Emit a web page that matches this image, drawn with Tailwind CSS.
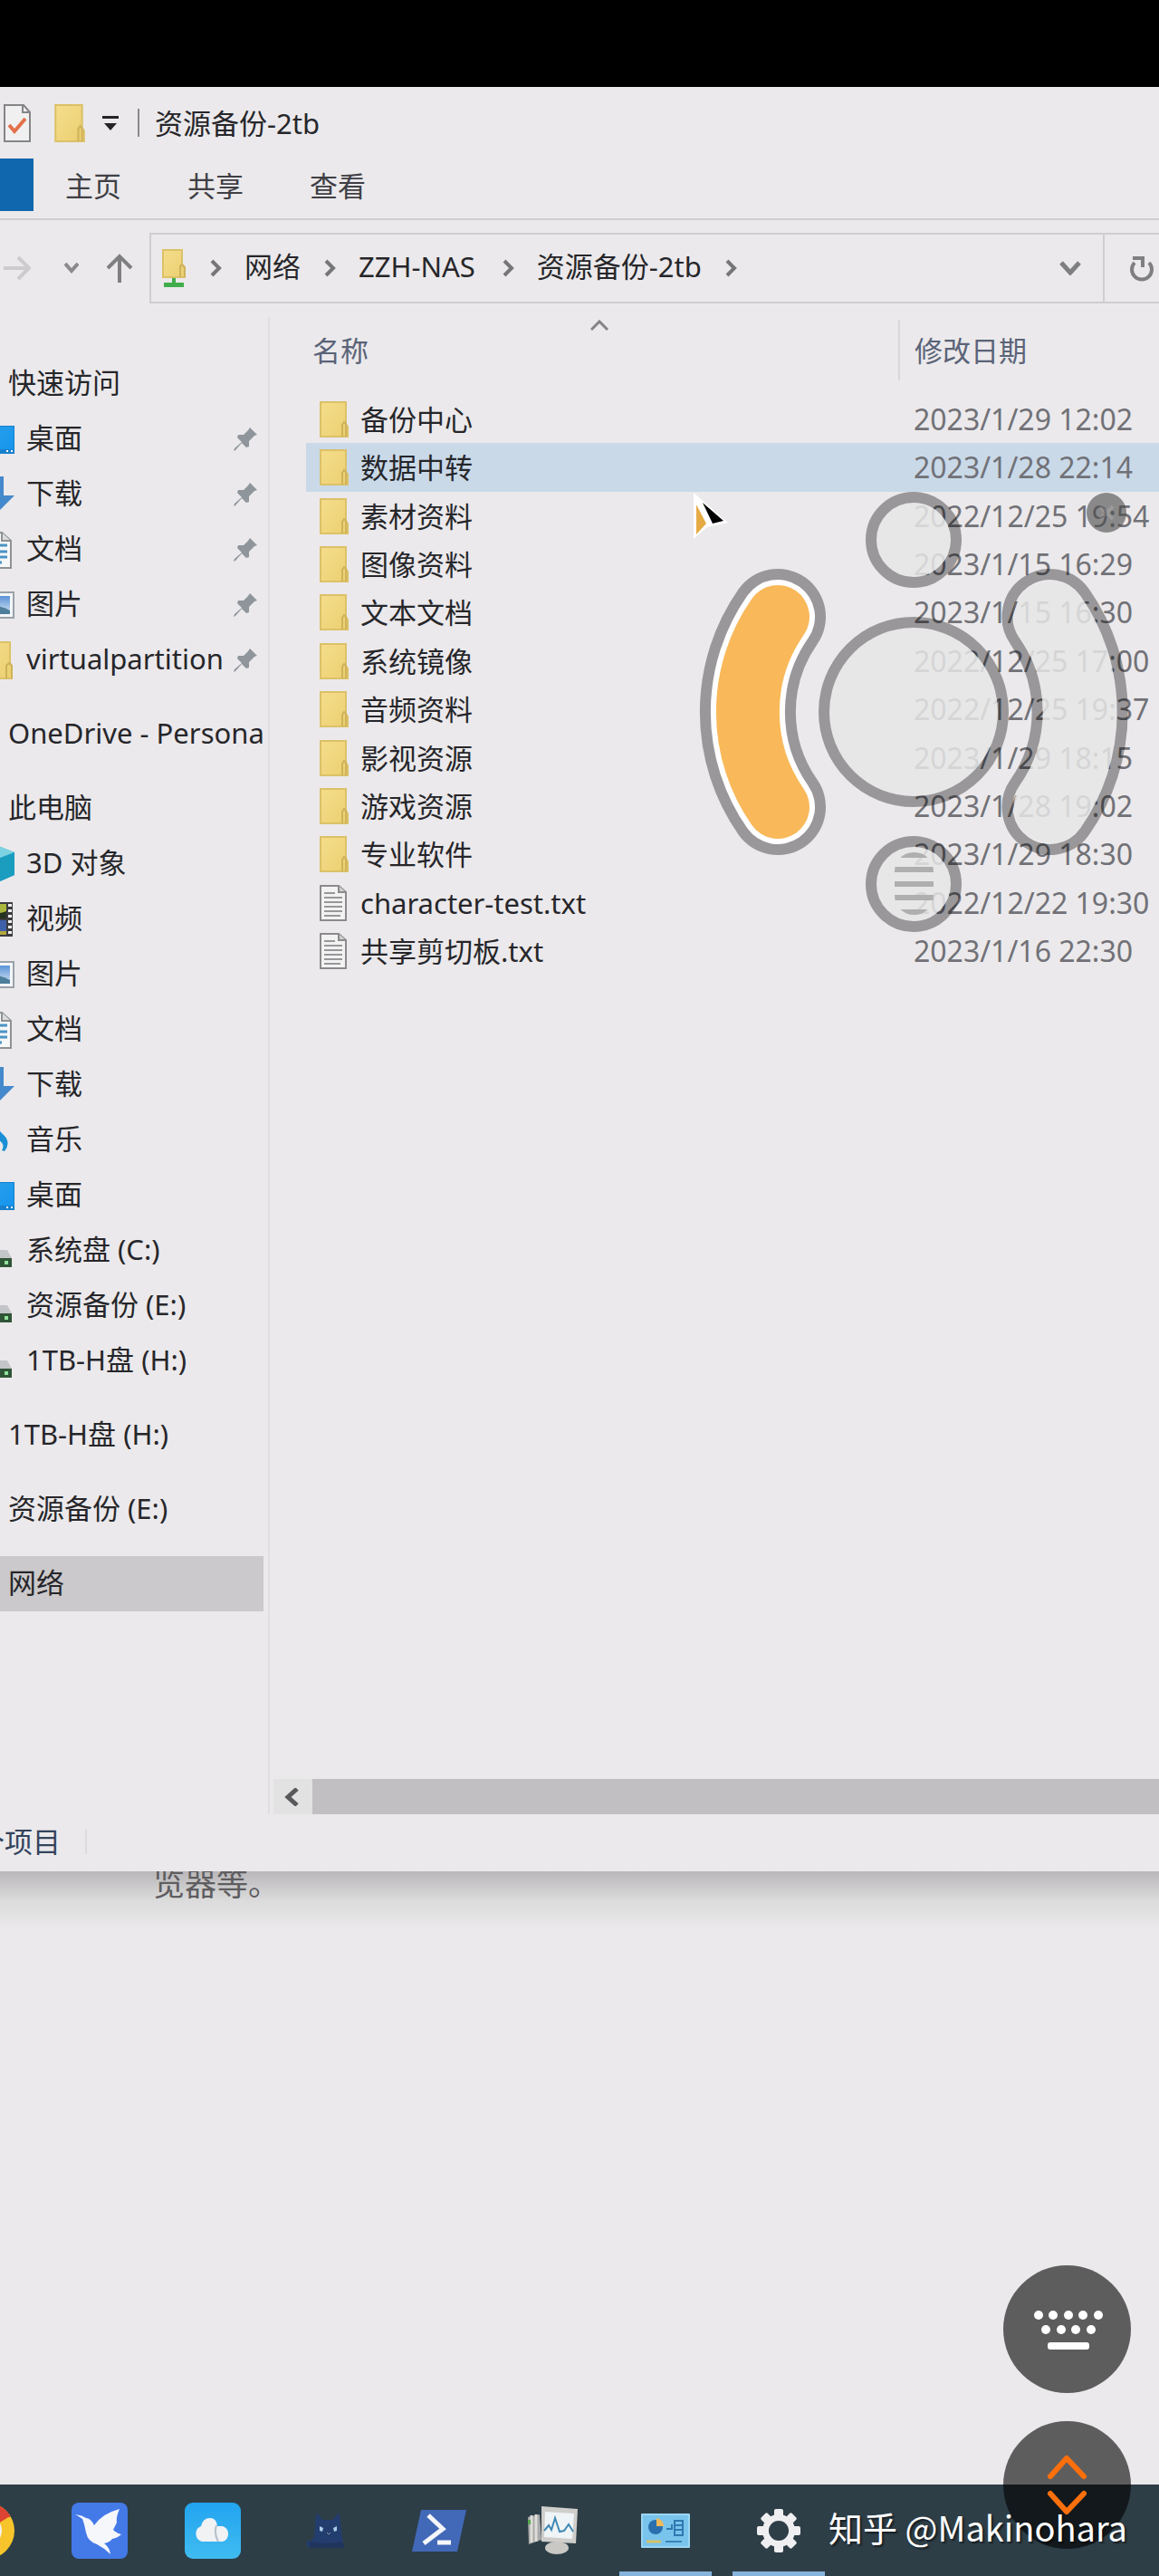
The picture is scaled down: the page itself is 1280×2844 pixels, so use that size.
<!DOCTYPE html>
<html lang="zh-CN">
<head>
  <meta charset="UTF-8" />
  <meta name="viewport" content="width=device-width, initial-scale=1" />
  <title>资源备份-2tb</title>
  <script src="https://cdn.jsdelivr.net/npm/@tailwindcss/browser@4"></script>
</head>
<body class="relative flex min-h-screen flex-col overflow-x-hidden bg-[#ebe9eb] font-['Noto_Sans','Noto_Sans_CJK_SC',sans-serif] text-[31px] leading-[40px] text-[#26262a]">

  <!-- Icon set -->
  <svg class="absolute size-0" aria-hidden="true">
    <defs>
      <linearGradient id="g-folder" x1="0" y1="0" x2="1" y2="1"><stop offset="0" stop-color="#f5dd8c"/><stop offset="1" stop-color="#ebcf70"/></linearGradient>
      <linearGradient id="g-desktop" x1="0" y1="0" x2="1" y2="1"><stop offset="0" stop-color="#2a9fe8"/><stop offset="1" stop-color="#1796ee"/></linearGradient>
      <linearGradient id="g-sky" x1="0" y1="0" x2="0" y2="1"><stop offset="0" stop-color="#5b93d8"/><stop offset="1" stop-color="#d6e6f2"/></linearGradient>
      <linearGradient id="g-cloud" x1="0" y1="0" x2="0" y2="1"><stop offset="0" stop-color="#22a4f0"/><stop offset="1" stop-color="#3fbcf0"/></linearGradient>
    </defs>
    <symbol id="folder" viewBox="0 0 32 40"><path d="M1 1h28v24l2 3v11H1z" fill="url(#g-folder)" stroke="#dcc168" stroke-width="2"/><path d="M25 39V26l2-3 2 2v14" fill="none" stroke="#cfb25a" stroke-width="2"/></symbol>
    <symbol id="text" viewBox="0 0 32 40"><path d="M1 1h20l8 7v31H1z" fill="#f2f2f3" stroke="#8b8b8d" stroke-width="2"/><path d="M21 1v7h8" fill="#cfcfd0" stroke="#8b8b8d" stroke-width="2"/><path d="M5 9h12M5 14h20M5 19h20M5 24h20M5 29h20M5 34h18" stroke="#98989a" stroke-width="2"/></symbol>
    <symbol id="desktop" viewBox="0 0 36 42"><path d="M0 6h36v31H0z" fill="#1780cc"/><path d="M0 7h35v25H0z" fill="url(#g-desktop)"/><path d="M27 33h2v2h-2zM32 33h2v2h-2z" fill="#fff"/></symbol>
    <symbol id="download" viewBox="0 0 36 42"><path d="M12 1h12v21h12L18 40 0 22h12z" fill="#4389cc"/></symbol>
    <symbol id="document" viewBox="0 0 36 42"><path d="M2 2h20l10 9v30H2z" fill="#f6f7f8" stroke="#8f9294" stroke-width="2"/><path d="M22 2v9h10" fill="#dcdcde" stroke="#8f9294" stroke-width="2"/><path d="M6 16h22M6 23h22M6 29h22M6 35h16" stroke="#4a93c4" stroke-width="3"/></symbol>
    <symbol id="picture" viewBox="0 0 36 42"><path d="M1 7h34v28H1z" fill="#f4f6f8" stroke="#9aa2aa" stroke-width="2"/><path d="M5 11h26v20H5z" fill="url(#g-sky)"/><path d="M5 24q10-5 26 3v4H5z" fill="#4d7f9c"/></symbol>
    <symbol id="folder-wide" viewBox="0 0 36 42"><path d="M2 1h29v23l2 3v14H2z" fill="url(#g-folder)" stroke="#dcc168" stroke-width="2"/><path d="M27 41V27l3-3 3 3v14" fill="none" stroke="#cfb25a" stroke-width="2"/></symbol>
    <symbol id="cube" viewBox="0 0 36 42"><path d="M18 1l18 7v25L18 41 0 33V8z" fill="#25a5c4"/><path d="M18 1l18 7-18 7L0 8z" fill="#7ed3e2"/><path d="M18 15l18-7v25l-18 8z" fill="#1b9dc0"/></symbol>
    <symbol id="film" viewBox="0 0 36 42"><path d="M2 2h32v38H2z" fill="#3b3b40"/><path d="M6 4h21v16H6z" fill="#a9b53b"/><path d="M6 22h21v12H6z" fill="#3f5fa8"/><path d="M6 13q8 4 21-1v8H6z" fill="#25331f"/><path d="M6 34h21v4H6z" fill="#b2a73c"/><path d="M31 4v35" stroke="#f1f1f1" stroke-width="4" stroke-dasharray="3 3"/></symbol>
    <symbol id="music" viewBox="0 0 36 42"><path d="M15 1q1 6 8 13 10 9 2 19l-3-1q5-8-7-13z" fill="#1b8fd6"/><ellipse cx="9" cy="35" rx="8" ry="6" fill="#1b8fd6"/></symbol>
    <symbol id="drive" viewBox="0 0 36 42"><path d="M2 20h26l5 9H0z" fill="#c4c5c8"/><path d="M0 29h33v10H0z" fill="#2f5537"/><path d="M25 32h4v4h-4z" fill="#8fe39a"/></symbol>
    <symbol id="pin" viewBox="0 0 26 26"><path d="M18 0l8 8-3 1-1 1-5 5 0 6-3 1-5-5-7 8-2 1 1-3 8-7-5-5 1-3h6l5-5z" fill="#8e959b"/></symbol>
    <symbol id="next" viewBox="0 0 14 20"><path d="M3 2l8 8-8 8" fill="none" stroke="#767578" stroke-width="4"/></symbol>
  </svg>

  <div class="h-24 bg-black"></div>

  <!-- Explorer window -->
  <div>
    <header>
      <div class="flex h-[79px] items-center pl-1">
        <svg class="h-[42px] w-[30px]" viewBox="0 0 30 42"><path d="M1 1h21l7 8v32H1z" fill="#f1f0f1" stroke="#858487" stroke-width="2"/><path d="M21 1v8h8" fill="none" stroke="#858487" stroke-width="2"/><path d="M6 23l6 7L24 16" fill="none" stroke="#e2714a" stroke-width="4"/></svg>
        <svg class="ml-[26px] h-[42px] w-[34px]"><use href="#folder"/></svg>
        <svg class="ml-[19px] h-[18px] w-[18px]" viewBox="0 0 18 18"><path d="M0 1h18v3H0zM2 9h14l-7 8z" fill="#242427"/></svg>
        <span class="ml-[21px] h-[31px] w-[2px] bg-[#8a898c]"></span>
        <h1 class="ml-[17px]">资源备份-2tb</h1>
      </div>
      <nav class="flex border-b-2 border-[#cfcdd0] pb-2 text-[#3f3f45]">
        <a href="#" aria-label="文件" class="h-[58px] w-[37px] bg-[#1167ad]"></a>
        <a href="#" class="ml-[35px] pt-[10px]">主页</a>
        <a href="#" class="ml-[73px] pt-[10px]">共享</a>
        <a href="#" class="ml-[73px] pt-[10px]">查看</a>
      </nav>
      <div class="flex items-center pt-[14px] pb-[15px] pl-1">
        <button aria-label="前进"><svg class="h-[30px] w-[30px]" viewBox="0 0 30 30"><path d="M0 15h27M16 3l12 12-12 12" fill="none" stroke="#cdcbce" stroke-width="4"/></svg></button>
        <button aria-label="最近位置" class="ml-[37px]"><svg class="h-3 w-4" viewBox="0 0 16 12"><path d="M1 1l7 8 7-8" fill="none" stroke="#8b8a8d" stroke-width="4"/></svg></button>
        <button aria-label="上移" class="ml-[30px]"><svg class="h-8 w-[30px]" viewBox="0 0 30 32"><path d="M15 32V3M2 16L15 3l13 13" fill="none" stroke="#7f7e81" stroke-width="4"/></svg></button>
        <div class="ml-[18px] flex h-[78px] min-w-0 flex-1 items-center border-y-2 border-l-2 border-[#cfcdd0] whitespace-nowrap">
          <svg class="ml-3 h-[42px] w-[26px]" viewBox="0 0 26 42"><path d="M1 1h21v17l3 3v10H1z" fill="url(#g-folder)" stroke="#dcc168" stroke-width="2"/><path d="M20 31V19l2-2 3 3v11" fill="none" stroke="#cfb25a" stroke-width="2"/><path d="M11 32h4v5h9v5H2v-5h9z" fill="#3fae4a"/></svg>
          <svg class="ml-[26px] h-5 w-[14px]"><use href="#next"/></svg>
          <a href="#" class="ml-[25px] pb-1">网络</a>
          <svg class="ml-[25px] h-5 w-[14px]"><use href="#next"/></svg>
          <a href="#" class="ml-[25px] pb-1">ZZH-NAS</a>
          <svg class="ml-[29px] h-5 w-[14px]"><use href="#next"/></svg>
          <a href="#" class="ml-[25px] pb-1">资源备份-2tb</a>
          <svg class="ml-[25px] h-5 w-[14px]"><use href="#next"/></svg>
          <button aria-label="展开地址" class="mr-6 ml-auto"><svg class="h-4 w-6" viewBox="0 0 24 16"><path d="M2 2l10 11L22 2" fill="none" stroke="#7f7e81" stroke-width="5"/></svg></button>
          <button aria-label="刷新" class="flex h-full w-[62px] items-center border-l-2 border-[#cfcdd0] pl-7"><svg class="h-[30px] w-[28px]" viewBox="0 0 28 30"><path d="M5 9a11 11 0 1 0 16 0M3 4h11v10" fill="none" stroke="#7f7e81" stroke-width="4"/></svg></button>
        </div>
      </div>
    </header>

    <main class="flex">
      <aside class="w-[298px] shrink-0 overflow-hidden border-r-2 border-[#e1dfe2] pt-[43px] pb-[224px]">
        <ul id="tree" class="mr-[5px] whitespace-nowrap"></ul>
      </aside>

      <section class="flex min-w-0 flex-1 flex-col">
        <div class="flex-1 pl-10">
          <table class="h-[727px] w-full table-fixed text-left">
            <thead class="text-[#5a6378]">
              <tr class="h-[86px] align-top">
                <th class="relative pt-[17px] pl-[7px] font-normal">名称
                  <svg class="absolute top-[3px] left-[314px] h-3 w-5" viewBox="0 0 20 12"><path d="M1 11l9-9 9 9" fill="none" stroke="#848386" stroke-width="3"/></svg>
                </th>
                <th class="w-[288px] pt-[3px] font-normal"><div class="h-[67px] border-l-2 border-[#d9d7da] pt-[14px] pl-4">修改日期</div></th>
              </tr>
            </thead>
            <tbody id="files" class="whitespace-nowrap"></tbody>
          </table>
        </div>
        <div class="flex h-[39px] pl-1">
          <button aria-label="向左滚动" class="flex w-[43px] items-center justify-center bg-[#e3e2e3] pr-1"><svg class="h-5 w-4" viewBox="0 0 16 20"><path d="M14 1L4 10l10 9" fill="none" stroke="#59585b" stroke-width="5"/></svg></button>
          <div class="flex-1 bg-[#c1bfc1]"></div>
        </div>
      </section>
    </main>

    <footer class="flex h-[63px] items-center overflow-hidden pb-[3px] text-[#33435c]">
      <span class="-ml-[26px]">个项目</span>
      <span class="ml-[27px] h-7 w-[2px] bg-[#dddbde]"></span>
    </footer>
  </div>

  <!-- Page behind the window, shaded by it -->
  <div class="flex-1 overflow-hidden">
    <div class="h-16 bg-linear-to-b from-[#b9b7b9] via-[#dcdbdc] to-[#ebe9eb] pl-[169px]">
      <p class="relative -top-1 text-[35px] leading-[35px] text-[#5e5d60]">览器等。</p>
    </div>
  </div>

  <!-- Taskbar -->
  <div class="flex h-[101px] overflow-hidden bg-[#2e3e47]">
    <button aria-label="Chrome" class="-ml-[78px] flex w-[125px] shrink-0 items-center justify-center">
      <svg class="h-[62px] w-[62px]" viewBox="0 0 62 62"><circle cx="31" cy="31" r="31" fill="#f7c52b"/><path d="M31 31L4 15a31 31 0 0 1 53 0z" fill="#dd4332"/><path d="M31 0a31 31 0 0 1 27 16H31z" fill="#dd4332"/><path d="M4 15a31 31 0 0 0 27 47l9-25z" fill="#3aa757"/><circle cx="31" cy="31" r="17" fill="#f3f1ee"/><circle cx="31" cy="31" r="12" fill="#4585ec"/></svg>
    </button>
    <button aria-label="迅雷" class="flex w-[125px] shrink-0 items-center justify-center">
      <svg class="h-[62px] w-[62px]" viewBox="0 0 62 62"><rect width="62" height="62" rx="8" fill="#4479e8"/><path d="M4 13q8 1 12 4 5 0 9 8Q34 12 53 7q-4 9-3 15l-4 8q4 4 9 5-4 4-10 5-3 4-9 5 6 4 7 12-7-7-15-11-10-3-12-13-2-10-4-15-4-3-8-5z" fill="#f5f7fb"/></svg>
    </button>
    <button aria-label="云盘" class="flex w-[125px] shrink-0 items-center justify-center">
      <svg class="h-[62px] w-[62px]" viewBox="0 0 62 62"><rect width="62" height="62" rx="9" fill="url(#g-cloud)"/><path d="M19 43a9 9 0 0 1-1-17q2-9 10-9 7 0 8 9h6a9 9 0 0 1 0 17z" fill="#f0f2f4"/><path d="M35 25q-3 9 2 18" fill="none" stroke="#b4bfca" stroke-width="2"/></svg>
    </button>
    <button aria-label="Clash" class="flex w-[125px] shrink-0 items-center justify-center">
      <svg class="h-[40px] w-[44px]" viewBox="0 0 44 40"><path d="M11 1q4 1 7 7h12q3-6 7-7l2 21 3 17H4q-5-3-3-8 6 2 8-5z" fill="#233d6e"/><path d="M4 32q16 4 36 0l2 7H4z" fill="#21345c"/><path d="M15 15l4 2-1 4-3-1zM34 15l-4 2 1 4 3-1z" fill="#a9cce8"/><path d="M23 22l2 2 2-2" fill="none" stroke="#7a92b4"/></svg>
    </button>
    <button aria-label="PowerShell" class="flex w-[125px] shrink-0 items-center justify-center">
      <svg class="h-[48px] w-[60px]" viewBox="0 0 60 48"><path d="M10 1h50L50 47H0z" fill="#4268b8"/><path d="M18 7l16 15-21 16" fill="none" stroke="#f4f6fa" stroke-width="5"/><path d="M28 37h15" stroke="#f4f6fa" stroke-width="5"/></svg>
    </button>
    <button aria-label="监视器" class="flex w-[125px] shrink-0 items-center justify-center">
      <svg class="h-[54px] w-[56px]" viewBox="0 0 56 54"><path d="M1 12l13-3 2 28-14 5z" fill="#a9aaa9"/><path d="M5 10v30M10 9v30" stroke="#deddd9" stroke-width="3"/><path d="M1 15h3v5H1z" fill="#57a74f"/><ellipse cx="33" cy="46" rx="13" ry="7" fill="#c9c8c5"/><path d="M16 0l40 3-2 38-38-2z" fill="#cfcecb"/><path d="M20 6l32 2-2 28-31-2z" fill="#eff4f6"/><path d="M19 27l5-6 3 5 4-13 5 15 5-1 5-7 5 8" fill="none" stroke="#3f89b4" stroke-width="2"/></svg>
    </button>
    <button aria-label="控制面板" class="relative flex w-[125px] shrink-0 items-center justify-center">
      <svg class="h-[38px] w-[54px]" viewBox="0 0 54 38"><rect width="54" height="38" rx="1" fill="#9bd6f2"/><path d="M2 2h50v34H2z" fill="#79c4ec"/><circle cx="16" cy="15" r="8" fill="#2b70ad"/><path d="M17 14V5a9 9 0 0 1 8 9z" fill="#eeb95b"/><path d="M37 8h9v16h-9zM37 13h9M37 18h9M28 17h6v-5" fill="none" stroke="#3078b0" stroke-width="2"/><path d="M6 31h16" stroke="#d5c36b" stroke-width="3"/><path d="M27 31h18" stroke="#3c83b8" stroke-width="2"/></svg>
      <span class="absolute bottom-0 h-[5px] w-[102px] bg-[#86b3dc]"></span>
    </button>
    <button aria-label="设置" class="relative flex w-[125px] shrink-0 items-center justify-center">
      <svg class="h-12 w-12" viewBox="0 0 48 48"><g fill="#efeff1"><g id="teeth"><rect x="19" y="0" width="10" height="48" rx="2"/><rect x="0" y="19" width="48" height="10" rx="2"/></g><use href="#teeth" transform="rotate(45 24 24)"/><circle cx="24" cy="24" r="18"/></g><circle cx="24" cy="24" r="11" fill="#2e3e47"/></svg>
      <span class="absolute bottom-0 h-[5px] w-[102px] bg-[#86b3dc]"></span>
    </button>
  </div>

  <!-- Pointer and touch pad that float over the desktop -->
  <svg class="absolute top-[540px] left-[760px] h-[500px] w-[500px]" viewBox="760 540 500 500">
    <path d="M766 544v51l15-13 23-5z" fill="#fff"/>
    <path d="M769 557v33l11-12z" fill="#e6aa45"/>
    <path d="M776 555l23 20-12 3z" fill="#000"/>
    <g fill="#e6e6e6" fill-opacity=".85">
      <circle cx="1009" cy="596" r="41"/>
      <circle cx="1009" cy="786" r="93"/>
      <circle cx="1009" cy="976" r="41"/>
      <path d="M1126 704A41 41 0 0 1 1193 657A225 225 0 0 1 1193 915A41 41 0 0 1 1126 868A143 143 0 0 0 1126 704Z"/>
    </g>
    <g fill="none" stroke="#000" stroke-opacity=".35" stroke-width="12">
      <circle cx="1009" cy="596" r="47"/>
      <circle cx="1009" cy="786" r="99"/>
      <circle cx="1009" cy="976" r="47"/>
      <path d="M1121 708A47 47 0 0 1 1198 654A230 230 0 0 1 1198 918A47 47 0 0 1 1121 864A136 136 0 0 0 1121 708Z"/>
    </g>
    <g fill="none" stroke-linecap="round">
      <path d="M859 681A183 183 0 0 0 859 891" stroke="#999799" stroke-width="106"/>
      <path d="M859 681A183 183 0 0 0 859 891" stroke="#fff" stroke-width="82"/>
      <path d="M859 681A183 183 0 0 0 859 891" stroke="#f9b95a" stroke-width="70"/>
    </g>
    <clipPath id="wheel"><rect x="988" y="941" width="43" height="69" rx="21"/></clipPath>
    <path clip-path="url(#wheel)" d="M988 944h43M988 960h43M988 976h43M988 991h43M988 1007h43" stroke="#afafaf" stroke-width="6"/>
    <circle cx="1222" cy="566" r="22" fill="#4a4a4a" fill-opacity=".6"/>
    <path d="M1215 559l14 14M1229 559l-14 14" stroke="#fff" stroke-opacity=".15" stroke-width="4"/>
  </svg>

  <!-- Floating buttons -->
  <div class="absolute right-[31px] bottom-[30px] flex flex-col gap-[31px]">
    <button aria-label="键盘" class="size-[141px] rounded-full bg-black/60">
      <svg viewBox="0 0 141 141"><g fill="#fff"><circle cx="39" cy="55" r="5"/><circle cx="55" cy="55" r="5"/><circle cx="72" cy="55" r="5"/><circle cx="88" cy="55" r="5"/><circle cx="105" cy="55" r="5"/><circle cx="47" cy="71" r="5"/><circle cx="64" cy="71" r="5"/><circle cx="80" cy="71" r="5"/><circle cx="97" cy="71" r="5"/><rect x="49" y="85" width="46" height="8" rx="3"/></g></svg>
    </button>
    <button aria-label="滚动" class="size-[141px] rounded-full bg-black/60">
      <svg viewBox="0 0 141 141"><path d="M52 61l18-20 19 20M52 80l18 20 19-20" fill="none" stroke="#fb6f0c" stroke-width="6" stroke-linecap="round" stroke-linejoin="round"/></svg>
    </button>
  </div>
  <p class="absolute right-[35px] bottom-[27px] font-['Noto_Sans_CJK_SC',sans-serif] text-[38px] leading-[54px] text-white text-shadow-[2px_2px_2px_#0008]">知乎 @Makinohara</p>

  <script>
    // [label, icon, pinned]; a null starts a new group
    const tree = [
      ["快速访问"], ["桌面", "desktop", true], ["下载", "download", true], ["文档", "document", true],
      ["图片", "picture", true], ["virtualpartition", "folder-wide", true], null,
      ["OneDrive - Personal"], null,
      ["此电脑"], ["3D 对象", "cube"], ["视频", "film"], ["图片", "picture"], ["文档", "document"],
      ["下载", "download"], ["音乐", "music"], ["桌面", "desktop"],
      ["系统盘 (C:)", "drive"], ["资源备份 (E:)", "drive"], ["1TB-H盘 (H:)", "drive"], null,
      ["1TB-H盘 (H:)"], null, ["资源备份 (E:)"], null, ["网络"]
    ];
    const selected = "网络";

    document.getElementById("tree").innerHTML = tree.map((item) => {
      if (!item) return `<li class="h-[21px]"></li>`;
      const [label, icon, pinned] = item;
      const mark = icon
        ? `<svg class="mr-[13px] -ml-5 h-[42px] w-9 shrink-0"><use href="#${icon}"/></svg>`
        : `<span class="w-[9px] shrink-0"></span>`;
      const pin = pinned ? `<svg class="mr-[7px] ml-auto size-[26px] shrink-0"><use href="#pin"/></svg>` : "";
      return `<li class="overflow-hidden ${label === selected ? "bg-[#cbc9cb]" : ""}"><a href="#" class="flex h-[61px] items-center">${mark}<span class="pb-1">${label}</span>${pin}</a></li>`;
    }).join("");

    const files = [
      ["备份中心", "2023/1/29 12:02"], ["数据中转", "2023/1/28 22:14"], ["素材资料", "2022/12/25 19:54"],
      ["图像资料", "2023/1/15 16:29"], ["文本文档", "2023/1/15 16:30"], ["系统镜像", "2022/12/25 17:00"],
      ["音频资料", "2022/12/25 19:37"], ["影视资源", "2023/1/29 18:15"], ["游戏资源", "2023/1/28 19:02"],
      ["专业软件", "2023/1/29 18:30"], ["character-test.txt", "2022/12/22 19:30"], ["共享剪切板.txt", "2023/1/16 22:30"]
    ];

    document.getElementById("files").innerHTML = files.map(([name, date], i) => `
      <tr class="${i === 1 ? "bg-[#c9d9e8]" : ""}">
        <td class="pl-[15px]"><div class="flex items-center"><svg class="mr-[13px] h-10 w-8"><use href="#${name.endsWith(".txt") ? "text" : "folder"}"/></svg>${name}</div></td>
        <td class="pl-[17px] text-[32px] text-[#717177]">${date}</td>
      </tr>`).join("");
  </script>
</body>
</html>
